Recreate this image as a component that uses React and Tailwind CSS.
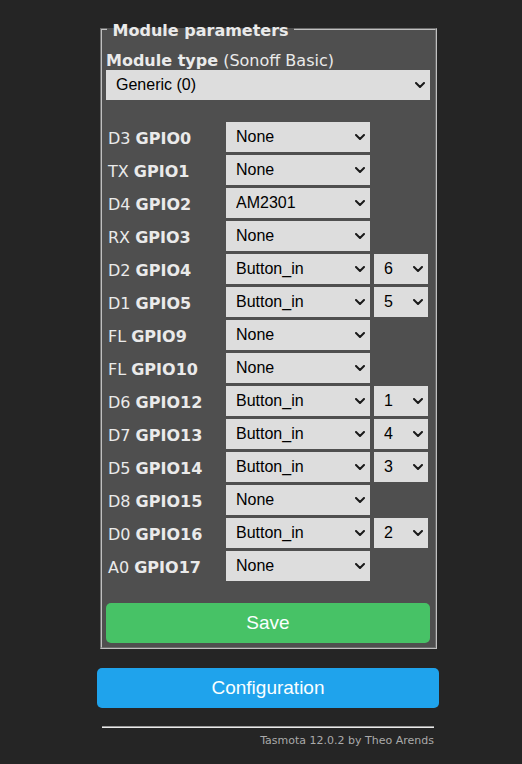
import React from "react";

const rows = [
  ["D3", "GPIO0", "None"],
  ["TX", "GPIO1", "None"],
  ["D4", "GPIO2", "AM2301"],
  ["RX", "GPIO3", "None"],
  ["D2", "GPIO4", "Button_in", "6"],
  ["D1", "GPIO5", "Button_in", "5"],
  ["FL", "GPIO9", "None"],
  ["FL", "GPIO10", "None"],
  ["D6", "GPIO12", "Button_in", "1"],
  ["D7", "GPIO13", "Button_in", "4"],
  ["D5", "GPIO14", "Button_in", "3"],
  ["D8", "GPIO15", "None"],
  ["D0", "GPIO16", "Button_in", "2"],
  ["A0", "GPIO17", "None"],
];

function Chevron() {
  return (
    <svg
      className="pointer-events-none absolute right-[5px] top-1/2 -translate-y-1/2"
      width="10"
      height="6"
      viewBox="0 0 10 6"
    >
      <path d="M1 1 L5 5 L9 1" fill="none" stroke="#1a1a1a" strokeWidth="2" strokeLinecap="round" strokeLinejoin="round" />
    </svg>
  );
}

function Sel({ value, className }) {
  return (
    <div className={"relative " + className}>
      <select
        defaultValue={value}
        className="block h-[30px] w-full appearance-none bg-[#dddddd] pl-[10px] pr-[20px] font-['Liberation_Sans',Arial,sans-serif] text-[16px] text-black outline-none"
      >
        <option value={value}>{value}</option>
      </select>
      <Chevron />
    </div>
  );
}

export default function App() {
  return (
    <div className="min-h-screen bg-[#252525] pl-[97px] pt-[19px] font-['DejaVu_Sans',Verdana,sans-serif] text-[16px] text-[#eaeaea]">
      <div className="flex w-[342px] flex-col">
        <fieldset className="ml-[3px] mr-[2px] border-2 border-[#c0c0c0] bg-[#4f4f4f] pb-[4px] pl-[4px] pr-[5px] [border-style:groove]">
          <legend className="ml-[1px] pt-[4px] font-bold leading-[15px]">
            &nbsp;Module parameters&nbsp;
          </legend>
          <div className="mt-[14px] leading-[18px]">
            <b>Module type</b> (Sonoff Basic)
          </div>
          <Sel value="Generic (0)" className="w-[324px]" />
          <div className="mt-[22px] flex flex-col gap-[3px]">
            {rows.map(([pin, gpio, fn, idx]) => (
              <div key={gpio} className="flex items-start">
                <div className="w-[120px] pl-[2px] pt-[8px] leading-[18px]">
                  {pin} <b>{gpio}</b>
                </div>
                <Sel value={fn} className="w-[144px]" />
                {idx && <Sel value={idx} className="ml-[4px] w-[54px]" />}
              </div>
            ))}
          </div>
          <button className="mt-[22px] h-[40px] w-[324px] rounded-[5px] bg-[#47c266] font-['Liberation_Sans',Arial,sans-serif] text-[19px] text-[#faffff]">
            Save
          </button>
        </fieldset>
        <button className="mt-[19px] h-[40px] w-full rounded-[5px] bg-[#1fa3ec] font-['Liberation_Sans',Arial,sans-serif] text-[19px] text-[#faffff]">
          Configuration
        </button>
        <div className="ml-[5px] mr-[5px] mt-[18px] text-right">
          <div className="h-[2px] border-t border-b border-t-[#9a9a9a] border-b-[#eaeaea]"></div>
          <div className="mt-[6px] text-[11px] leading-[13px] text-[#aaaaaa]">Tasmota 12.0.2 by Theo Arends</div>
        </div>
      </div>
    </div>
  );
}
